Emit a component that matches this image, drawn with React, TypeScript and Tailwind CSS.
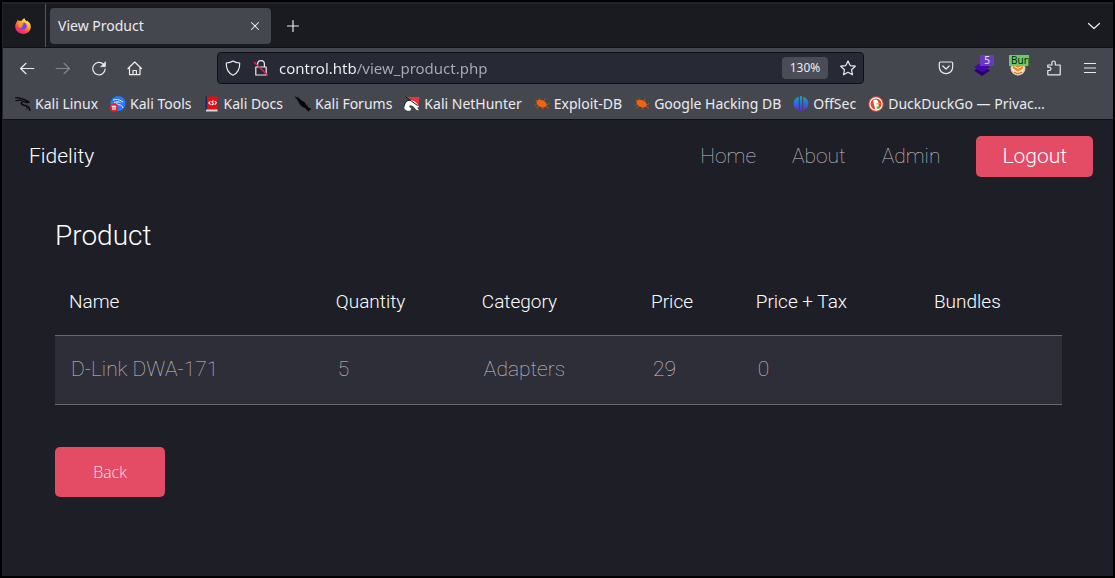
import type { ReactNode } from 'react';

const product = { name: 'D-Link DWA-171', quantity: 5, category: 'Adapters', price: 29, priceWithTax: 0, bundles: '' };

function Stroke({ children, size = 16, className = '' }: { children: ReactNode; size?: number; className?: string }) {
  return (
    <svg
      width={size}
      height={size}
      viewBox="0 0 16 16"
      fill="none"
      stroke="currentColor"
      strokeWidth="1.2"
      strokeLinecap="round"
      strokeLinejoin="round"
      className={`shrink-0 ${className}`}
      aria-hidden="true"
    >
      {children}
    </svg>
  );
}

function FirefoxLogo() {
  return (
    <svg width="16" height="16" viewBox="0 0 16 16" aria-hidden="true">
      <defs>
        <linearGradient id="fox" x1="0.8" y1="0.1" x2="0.25" y2="1">
          <stop offset="0" stopColor="#fff44f" />
          <stop offset="0.35" stopColor="#ffa52a" />
          <stop offset="0.65" stopColor="#ff4a3f" />
          <stop offset="1" stopColor="#e5158d" />
        </linearGradient>
      </defs>
      <path
        d="M9.6.2c.2 1.5 1.2 2.2 2 3.1.3-.1.4-.4.4-.8 1.900 1.300 3.900 3.400 3.800 6.400-.1 4-3.500 7-7.700 7-4.400 0-7.800-3.300-7.900-7.400 0-2.400 1-4 2.100-5.200l.2-1.600 1.500 1.200c.8-.2 1.700-.1 2.500.2C6.800 2.200 8 .9 9.600.2z"
        fill="url(#fox)"
      />
      <path d="M4 5.400c1.200-.6 2.400-.2 3 .4l2.200-1.200c1.700.7 2.800 2.100 2.600 4-.2 1.900-1.700 3.200-3.700 3.200-2 0-3.500-1.300-3.700-3.100.8.500 1.700.4 2.500-.1l1.600-.9c-.8-.3-1.700-.2-2.300-1.100-.4-.6-1.200-1-2.200-1.200z" fill="#7a3ff0" />
      <path d="M4 5c1.300-.8 2.600-.4 3.200.4l1.500.2-.8 1.300-2 .6c-.2.900.8 1.500 1.800 1.400-1.200 1.200-2.900 1-3.800-.2C3.200 7.600 3.300 6.200 4 5z" fill="#ff9a2c" />
    </svg>
  );
}

function KaliDragon({ color = '#0b0b0d' }: { color?: string }) {
  return (
    <g fill="none" stroke={color} strokeLinecap="round" strokeLinejoin="round">
      <path d="M.6 1.800C3 1.300 5.600 2 7.800 3.200M1 4.600c2-.7 3.800-.6 5.600-.1" strokeWidth="1.200" />
      <path d="M7.500 3.300c2.300.2 4 .9 5 1.900l1.600 1.100-2.100.2C9.500 5.300 6.700 5.200 6.300 7c-.3 2 2.300 2.200 4.300 2.600 2.300.5 3.700 1.600 4.300 4.800" strokeWidth="1.500" />
      <path d="M10.800 9.800c1.300.9 1.400 2 1.200 3.400" strokeWidth="1" />
    </g>
  );
}

function BookmarkIcon({ kind }: { kind: string }) {
  return (
    <svg width="16" height="16" viewBox="0 0 16 16" className="shrink-0" aria-hidden="true">
      {kind === 'linux' && <KaliDragon />}
      {kind === 'tools' && (
        <>
          <circle cx="8" cy="7.600" r="7.600" fill="#2777ff" />
          <path d="M3 4c3-1 6-.6 8 .8l2 1.400M4 6.500c3-1 5-.8 6.500.2M7.500 5.500c-1.500 2-.3 3 1.500 3.200 2 .3 3.500 1.300 4 3.300" stroke="#e8f0ff" strokeWidth="1" fill="none" />
          <circle cx="4" cy="11.800" r="4" fill="#e3222d" />
          <path d="M1.500 10.300h4.500M3 10.300v3.700M5 10.300v3.700" stroke="#fff" strokeWidth="1.100" />
        </>
      )}
      {kind === 'docs' && (
        <>
          <path d="M1.500.5h1.800v14H1.500z" fill="#172a5c" />
          <path d="M3.300.5h10.200v13H3.300z" fill="#e01218" />
          <path d="M2 13.500h11.500V15.500H2z" fill="#ded9d9" />
          <path d="M6.300 5.300 4.800 7l1.800 1.600M10.900 5l1.400 1.700-1.600 2M9.800 5.200c-1.500-.6-2.300.5-1.300 1.400 1.400.9.8 2.300-1 1.900" stroke="#fff" strokeWidth="1.100" fill="none" />
        </>
      )}
      {kind === 'forums' && (
        <path d="M0 .8 4.400 2.500l2 2.500 2.800 1 1.800 3 1.500.8.200 1.600 2.800 1.200.5 1.200-2.500-.3.500 2-2.500-2-1.200-1.800-3-1L5 8.300 3.700 5.500 2 4l.7-.6z" fill="#050506" stroke="#050506" strokeWidth=".5" />
      )}
      {kind === 'nethunter' && (
        <>
          <path d="M2.500 1h13L14.300 10z" fill="#f0303a" />
          <path d="M.2 11.500C0 6.800 3 4 7 4.300c4 .3 6 3.200 8 6.700l-1.800.8 1.800 2.400-2.600-.3c-2-2.400-3.900-4.900-5.900-4.700-2 .2-1.500 2.500.8 2.900l-1 2.700C2.700 15 .4 14 .2 11.500z" fill="#fff" />
          <path d="m1.500.8 12 8.700M.3 10.500C.3 7 2.700 4.300 6.300 4" stroke="#18181b" strokeWidth="1" fill="none" />
        </>
      )}
      {kind === 'bug' && (
        <>
          <ellipse cx="7.600" cy="7.600" rx="5.400" ry="3.400" transform="rotate(24 7.600 7.600)" fill="#ee6410" />
          <path d="M3 5 1.500 3.500M5.500 4.500 5 2.500M9.500 5l2-2.500M2.500 8.500.5 9.500M4.500 10l-2 2.500M8 11l1 2.500M12.500 9l3-1.500M12 10.500l3 2" stroke="#d9620f" strokeWidth=".7" />
        </>
      )}
      {kind === 'offsec' && (
        <>
          <defs>
            <linearGradient id="offsec" x1="0" y1="0" x2="0" y2="1">
              <stop offset="0" stopColor="#1fa5b5" />
              <stop offset=".5" stopColor="#2b6bd6" />
              <stop offset="1" stopColor="#6a20d8" />
            </linearGradient>
          </defs>
          <path d="M5.800.8v13.600C2.600 13.500.5 11 .5 7.700S2.600 1.800 5.800.8zM7 .3h2v15.200H7zM10.200.8c3.200 1 5.300 3.500 5.300 6.900s-2.100 5.800-5.300 6.700z" fill="url(#offsec)" />
        </>
      )}
      {kind === 'duck' && (
        <>
          <circle cx="8" cy="8" r="7.700" fill="#de4a33" />
          <circle cx="8" cy="8" r="6.100" fill="none" stroke="#fff" strokeWidth="1.100" />
          <path d="M5.200 4.500c1.200-1.500 4-1.200 4.800.8.500 1.200.3 2 .3 3l1.200 4.500c-1.400 1-3 1.200-4 1L5.800 8z" fill="#fff" />
          <path d="M8.300 7.500c1.300-.6 2.500-.5 3.700-.2-.9.800-2 1.300-3.600 1.300z" fill="#fdb81e" />
          <path d="m8.500 10.700 2.700-.6v2.800l-2.700-.5z" fill="#4cba3c" />
        </>
      )}
    </svg>
  );
}

const bookmarks = [
  { kind: 'linux', label: 'Kali Linux' },
  { kind: 'tools', label: 'Kali Tools' },
  { kind: 'docs', label: 'Kali Docs' },
  { kind: 'forums', label: 'Kali Forums' },
  { kind: 'nethunter', label: 'Kali NetHunter' },
  { kind: 'bug', label: 'Exploit-DB' },
  { kind: 'bug', label: 'Google Hacking DB' },
  { kind: 'offsec', label: 'OffSec' },
  { kind: 'duck', label: 'DuckDuckGo — Privac…' },
];

function TabBar() {
  return (
    <div className="flex h-11 items-center border-b border-[#101014] bg-[#1a1b20]">
      <button aria-label="Firefox View" className="flex h-full w-[43px] items-center border-r border-[#55565d] pl-3">
        <FirefoxLogo />
      </button>
      <div className="ml-1 flex h-9 w-[221px] items-center justify-between rounded bg-[#45474e] px-2">
        <span className="text-sm">View Product</span>
        <button aria-label="Close tab" className="flex size-4 items-center justify-center">
          <Stroke size={14}><path d="m4 4 8 8M12 4l-8 8" /></Stroke>
        </button>
      </div>
      <button aria-label="New tab" className="ml-3.5 flex size-4 items-center justify-center">
        <Stroke><path d="M8 2.500v11M2.500 8h11" /></Stroke>
      </button>
      <button aria-label="List all tabs" className="ml-auto mr-[11px] flex size-4 items-center justify-center">
        <Stroke><path d="m2.500 5.500 5.500 5 5.500-5" /></Stroke>
      </button>
    </div>
  );
}

function AddressBar() {
  return (
    <div className="flex h-10 items-center bg-[#45474e] pl-4 pr-[15px]">
      <div className="flex items-center gap-5">
        <button aria-label="Back one page"><Stroke><path d="M14.800 8.500H1.800M7 3.300 1.600 8.500 7 13.700" /></Stroke></button>
        <button aria-label="Forward one page" className="text-[#85868c]"><Stroke><path d="M1.200 8.500h13M9 3.300 14.400 8.500 9 13.700" /></Stroke></button>
        <button aria-label="Reload"><Stroke><path d="M14.200 9A6.200 6.200 0 1 1 12.500 4.300" /><path d="M14.500 2v4.700H9.800z" fill="currentColor" strokeWidth=".6" /></Stroke></button>
        <button aria-label="Home"><Stroke><path d="M1 8.500 7.700 2l6.800 6.500M2.500 7.500v7.200h10.500V7.500M6 14.500v-4h3.400v4" /></Stroke></button>
      </div>
      <div className="ml-[74px] flex h-8 w-[647px] items-center rounded border border-[#101014] bg-[#272935] pl-[7px] pr-[7px]">
        <button aria-label="Tracking protection"><Stroke><path d="M8 .9c2 1.300 4.300 1.900 6.700 2.100.2 5.300-1.500 9.800-6.700 12.200C2.800 12.800 1.100 8.300 1.300 3 3.700 2.800 6 2.200 8 .9z" /></Stroke></button>
        <button aria-label="Connection not secure" className="ml-3">
          <Stroke>
            <path d="M4.600 7V4.100a3.400 3.400 0 0 1 6.800 0V7M2.800 7h10.400v8H2.800z" />
            <path d="m1.500 2.500 13 12.500" stroke="#e22850" strokeWidth="1.500" />
          </Stroke>
        </button>
        <input
          aria-label="Address"
          defaultValue="control.htb/view_product.php"
          className="ml-2.5 min-w-0 flex-1 bg-[linear-gradient(to_right,#f4f4f6_78px,#acacb4_78px)] bg-clip-text text-[15px] text-transparent outline-none"
        />
        <button className="h-[22px] w-[46px] rounded-sm bg-[#4a4c56] text-center text-xs">130%</button>
        <button aria-label="Bookmark this page" className="ml-3"><Stroke><path d="m8 .9 2.200 4.700 5.100.6-3.800 3.500 1 5.100L8 12.300l-4.500 2.500 1-5.100L.7 6.200l5.100-.6z" /></Stroke></button>
      </div>
      <div className="ml-auto flex items-center gap-5">
        <button aria-label="Save to Pocket"><Stroke><path d="M2.500 2h11c.7 0 1.200.5 1.200 1.200V7A6.700 6.700 0 0 1 1.300 7V3.200C1.300 2.500 1.800 2 2.500 2z" /><path d="m4.800 6 3.200 3 3.200-3" /></Stroke></button>
        <button aria-label="Wappalyzer" className="relative">
          <svg width="16" height="16" viewBox="0 0 16 16" aria-hidden="true">
            <path d="m0 10.500 8-4 8 4-8 5.500z" fill="#25006e" />
            <path d="m0 7 8-5 8 5-8 5.500z" fill="#4608ad" />
          </svg>
          <span className="absolute -top-[5px] left-1.5 h-[11px] w-3.5 bg-[#6b39bf] text-center text-[10px] leading-[11px]">5</span>
        </button>
        <button aria-label="Proxy switcher" className="relative">
          <svg width="16" height="16" viewBox="0 0 16 16" aria-hidden="true">
            <circle cx="8" cy="8" r="7.500" fill="#d9ccb8" />
            <circle cx="8" cy="8" r="6.200" fill="#f7e9d2" />
            <path d="M3.300 3.500h9.400c1.300 3 .5 5.500-1.700 6.500L8 11.500 5 10C2.800 9 2 6.500 3.300 3.500z" fill="#f28a25" />
            <path d="M4.500 6.500 8 8.300l3.500-1.800" stroke="#fff0d8" strokeWidth="1" fill="none" />
            <path d="M4 12c2.200 1.900 5.800 1.900 8 0" stroke="#e07a1c" strokeWidth="1.200" fill="none" />
          </svg>
          <span className="absolute -left-px -top-[5px] h-[11px] w-5 overflow-hidden bg-[#66cc66] pl-0.5 text-left text-[10px] leading-[11px] text-[#0c1a0c]">Burp</span>
        </button>
        <button aria-label="Extensions"><Stroke><path d="M1.800 14.800v-4.300h1.500a1.500 1.500 0 0 0 0-3.300H1.800V5h4.100V2.700a1.700 1.700 0 0 1 3.400 0V5h4.900v9.800z" /></Stroke></button>
        <button aria-label="Open application menu"><Stroke><path d="M2.500 3.500h11M2.500 8h11M2.500 12.500h11" /></Stroke></button>
      </div>
    </div>
  );
}

function BookmarksBar() {
  return (
    <nav aria-label="Bookmarks" className="flex h-8 items-center gap-3 overflow-hidden whitespace-nowrap border-b border-[#101014] bg-[#45474e] pl-3 text-sm">
      {bookmarks.map((b) => (
        <a key={b.label} href="#" className="flex items-center gap-1">
          <BookmarkIcon kind={b.kind} />
          {b.label}
        </a>
      ))}
    </nav>
  );
}

function SiteHeader() {
  return (
    <header className="flex items-center justify-between pl-[26px] pr-5 pt-4 text-[21px]">
      <a href="#" className="font-light text-white">Fidelity</a>
      <nav aria-label="Site" className="flex items-center gap-9 font-thin text-[#c4c4c8]">
        <a href="#">Home</a>
        <a href="#">About</a>
        <a href="#">Admin</a>
        <button className="h-[41px] rounded-[5px] bg-[#e44c65] px-[26px] font-light text-white">Logout</button>
      </nav>
    </header>
  );
}

function ProductTable() {
  const head = 'h-[65px] px-3.5 text-left text-[19px] font-light text-white';
  const cell = 'h-[69px] px-4 text-[21px] font-thin';
  return (
    <table className="w-full table-fixed border-collapse">
      <colgroup>
        <col className="w-[26.5%]" />
        <col className="w-[14.5%]" />
        <col className="w-[16.8%]" />
        <col className="w-[10.4%]" />
        <col className="w-[17.7%]" />
        <col />
      </colgroup>
      <thead>
        <tr>
          <th className={head}>Name</th>
          <th className={head}>Quantity</th>
          <th className={head}>Category</th>
          <th className={head}>Price</th>
          <th className={head}>Price + Tax</th>
          <th className={head}>Bundles</th>
        </tr>
      </thead>
      <tbody>
        <tr className="border-y border-[#68686f] bg-[#2e2e38] text-[#c9c9cd]">
          <td className={cell}>{product.name}</td>
          <td className={cell}>{product.quantity}</td>
          <td className={cell}>{product.category}</td>
          <td className={cell}>{product.price}</td>
          <td className={cell}>{product.priceWithTax}</td>
          <td className={cell}>{product.bundles}</td>
        </tr>
      </tbody>
    </table>
  );
}

export default function App() {
  return (
    <div className="flex min-h-screen flex-col border-2 border-black bg-[#1e1e27] font-['Noto_Sans',sans-serif] text-[#ebebee]">
      <div className="flex flex-1 flex-col border-l border-t-2 border-[#23232e]">
        <TabBar />
        <AddressBar />
        <BookmarksBar />
        <div className="flex-1 font-['Roboto',sans-serif]">
          <SiteHeader />
          <main className="pl-[52px] pr-[51px] pt-[39px]">
            <h1 className="text-[28px] leading-10 font-light text-white">Product</h1>
            <div className="pt-[14px]">
              <ProductTable />
            </div>
            <button className="mt-[42px] h-[50px] w-[110px] rounded-[5px] bg-[#e44c65] font-['Noto_Sans',sans-serif] text-base font-extralight text-white">
              Back
            </button>
          </main>
        </div>
      </div>
    </div>
  );
}
